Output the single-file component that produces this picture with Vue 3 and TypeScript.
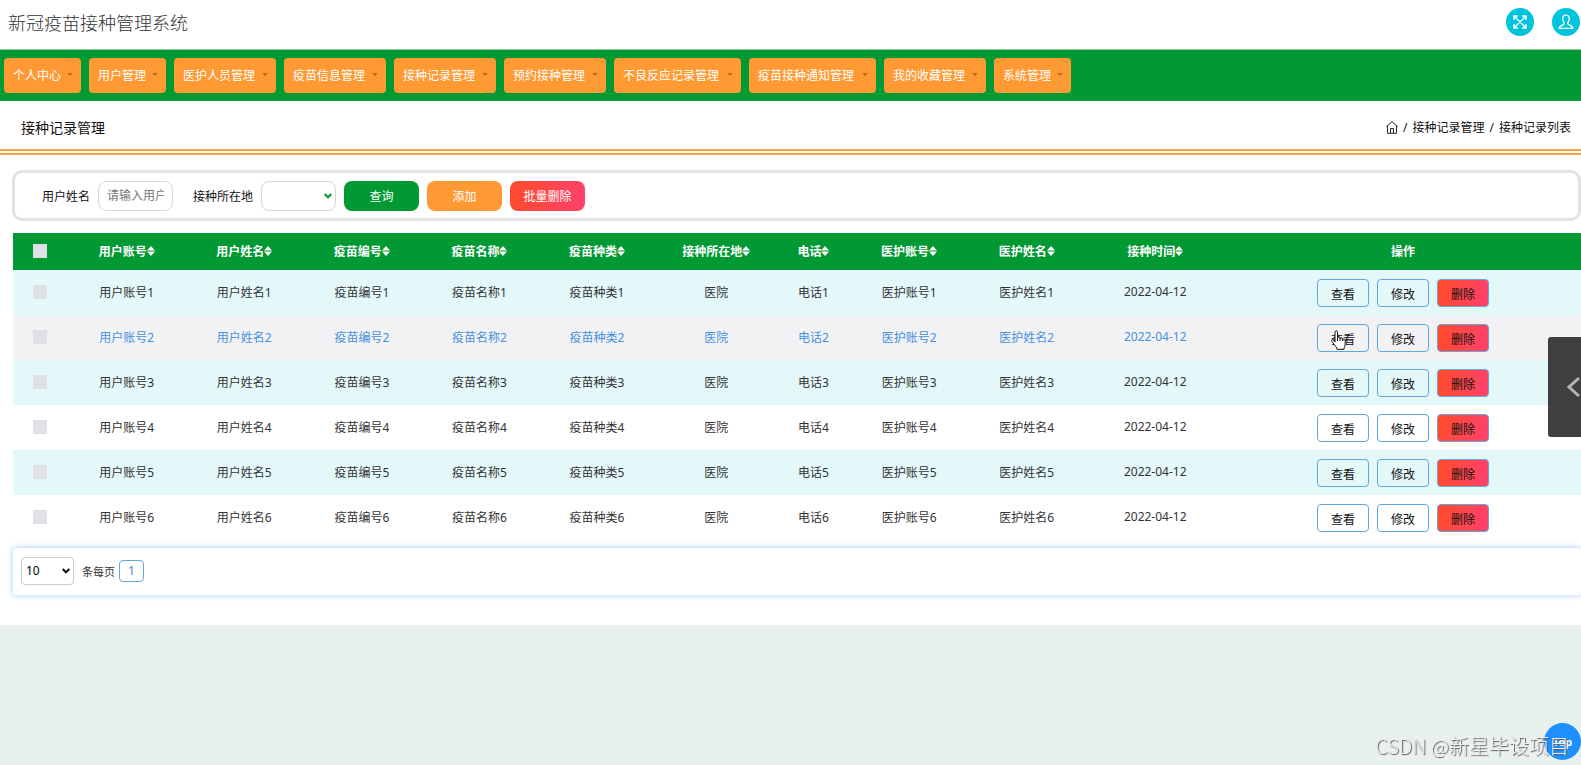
<script setup lang="ts">
import { ref } from 'vue'

interface Column {
  label: string
  key: string
  col: string
}

const menus = ['个人中心', '用户管理', '医护人员管理', '疫苗信息管理', '接种记录管理', '预约接种管理', '不良反应记录管理', '疫苗接种通知管理', '我的收藏管理', '系统管理']

const columns: Column[] = [
  { label: '用户账号', key: 'account', col: 'c-std' },
  { label: '用户姓名', key: 'name', col: 'c-std' },
  { label: '疫苗编号', key: 'code', col: 'c-std' },
  { label: '疫苗名称', key: 'vaccine', col: 'c-std' },
  { label: '疫苗种类', key: 'kind', col: 'c-std' },
  { label: '接种所在地', key: 'place', col: 'c-place' },
  { label: '电话', key: 'phone', col: 'c-phone' },
  { label: '医护账号', key: 'staffAccount', col: 'c-std' },
  { label: '医护姓名', key: 'staffName', col: 'c-std' },
  { label: '接种时间', key: 'date', col: 'c-date' },
]

const rows: Record<string, string>[] = [1, 2, 3, 4, 5, 6].map((n) => ({
  id: String(n),
  account: `用户账号${n}`,
  name: `用户姓名${n}`,
  code: `疫苗编号${n}`,
  vaccine: `疫苗名称${n}`,
  kind: `疫苗种类${n}`,
  place: '医院',
  phone: `电话${n}`,
  staffAccount: `医护账号${n}`,
  staffName: `医护姓名${n}`,
  date: '2022-04-12',
}))

const activeId = ref('2')
const userName = ref('')
const place = ref('')
const pageSize = ref('10')
</script>

<template>
  <div class="page">
    <div class="sheet">
      <header class="top">
        <h1>新冠疫苗接种管理系统</h1>
        <div class="tools">
          <button class="round" type="button" aria-label="全屏">
            <svg width="16" height="16" viewBox="0 0 16 16" fill="none" stroke="#fff" stroke-width="1.4">
              <path d="M2 6V2h4M10 2h4v4M14 10v4h-4M6 14H2v-4M2.5 2.5l11 11M13.5 2.5l-11 11" />
            </svg>
          </button>
          <button class="round" type="button" aria-label="用户">
            <svg width="16" height="16" viewBox="0 0 16 16" fill="none" stroke="#fff" stroke-width="1.3" stroke-linejoin="round">
              <path d="M8 1.2c-2.2 0-3.3 1.5-3.3 3.6 0 1.900.8 3.300 1.700 4.100.2 1-.2 1.400-1.200 1.800-2 .7-3.800 1.200-4 3.600h13.600c-.2-2.400-2-2.900-4-3.600-1-.4-1.400-.8-1.200-1.800.9-.8 1.700-2.200 1.700-4.100 0-2.100-1.100-3.600-3.300-3.600z" />
            </svg>
          </button>
        </div>
      </header>

      <nav class="menu">
        <button v-for="m in menus" :key="m" type="button" :class="'len' + m.length">
          <span>{{ m }}</span><i class="caret"></i>
        </button>
      </nav>

      <div class="heading">
        <h2>接种记录管理</h2>
        <div class="crumbs">
          <a href="#" aria-label="首页">
            <svg width="12" height="13" viewBox="0 0 12 13" fill="none" stroke="#222" stroke-width="1">
              <path d="M.5 5.500 6 .8l5.500 4.700M1.500 5v7.300h9V5M4.500 12V7.500h3V12" />
            </svg>
          </a>
          <span>/</span>
          <a href="#">接种记录管理</a>
          <span>/</span>
          <span>接种记录列表</span>
        </div>
      </div>

      <form class="filter" @submit.prevent>
        <label for="user">用户姓名</label>
        <input id="user" v-model="userName" class="field" type="text" placeholder="请输入用户姓名" />
        <label class="second" for="place">接种所在地</label>
        <span class="pick green">
          <select id="place" v-model="place" class="field">
            <option value=""></option>
            <option value="医院">医院</option>
          </select>
          <svg width="8" height="6" viewBox="0 0 8 6" fill="none" stroke="currentColor" stroke-width="2"><path d="M.7 1 4 4.300 7.300 1" /></svg>
        </span>
        <button class="act search" type="submit">查询</button>
        <button class="act add" type="button">添加</button>
        <button class="act remove" type="button">批量删除</button>
      </form>

      <table>
        <colgroup>
          <col class="c-check" />
          <col v-for="c in columns" :key="c.key" :class="c.col" />
          <col />
        </colgroup>
        <thead>
          <tr>
            <th><input type="checkbox" aria-label="全选" /></th>
            <th v-for="c in columns" :key="c.key">
              <span class="sort">{{ c.label }}<svg width="8" height="10" viewBox="0 0 8 10" fill="#fff"><path d="M0 4.500 4 0l4 4.500zM0 5.500h8L4 10z" /></svg></span>
            </th>
            <th>操作</th>
          </tr>
        </thead>
        <tbody>
          <tr v-for="r in rows" :key="r.id" :class="{ active: r.id === activeId }">
            <td><input type="checkbox" :aria-label="'选择' + r.account" /></td>
            <td v-for="c in columns" :key="c.key">{{ r[c.key] }}</td>
            <td class="last">
              <div class="ops">
                <span class="view">
                  <button type="button">查看</button>
                  <svg v-if="r.id === activeId" class="hand" width="16" height="20" viewBox="0 0 16 20" fill="#fff" stroke="#111" stroke-width="1" stroke-linejoin="round">
                    <path d="M4 12V2.200C4 .3 6.500.3 6.500 2.200V8c0-1.500 2.400-1.500 2.600 0v.8c.2-1.300 2.400-1.200 2.600.2v.8c.3-1.200 2.500-1 2.500.5v3.500c0 2-1.200 3-1.200 5.500H6c0-2-1.300-2.600-2.300-4.200C2.600 13.500 1.200 12.300.7 11.200c-.6-1.400.8-2 1.700-1.200z" />
                    <path d="M6.500 8v3M9.100 8.500V11M11.700 9.500V11" />
                  </svg>
                </span>
                <button type="button">修改</button>
                <button class="del" type="button">删除</button>
              </div>
            </td>
          </tr>
        </tbody>
      </table>

      <footer class="pager">
        <span class="pick dark">
          <select id="size" v-model="pageSize">
            <option value="10">10</option>
            <option value="25">25</option>
          </select>
          <svg width="8" height="6" viewBox="0 0 8 6" fill="none" stroke="currentColor" stroke-width="2"><path d="M.7 1 4 4.300 7.300 1" /></svg>
        </span>
        <label for="size">条每页</label>
        <button type="button">1</button>
      </footer>
    </div>

    <button class="drawer" type="button" aria-label="展开">
      <svg width="14" height="22" viewBox="0 0 14 22" fill="none" stroke="#b4b4b4" stroke-width="3"><path d="M13 2 3 11l10 9" /></svg>
    </button>
    <button class="to-top" type="button">Top</button>
    <div class="mark">CSDN @新星毕设项目</div>
  </div>
</template>

<style>
body {
  margin: 0;
  background: #e8f1ec;
}
</style>

<style scoped>
.page {
  min-height: 100vh;
  font-family: "Noto Sans", "Noto Sans CJK SC", sans-serif;
  font-size: 12px;
  color: #333;
}
.page * {
  box-sizing: border-box;
}
button,
input,
select {
  font: inherit;
}
button {
  padding: 0;
  border: 0;
  cursor: pointer;
}
a {
  color: inherit;
  text-decoration: none;
}
.sheet {
  background: #fff;
  padding-bottom: 30px;
}
.top {
  display: flex;
  align-items: center;
  justify-content: space-between;
  height: 50px;
  padding: 0 1px 6px 8px;
  border-bottom: 1px solid #8fcfa5;
}
h1 {
  margin: 0;
  font-size: 18px;
  font-weight: 300;
  color: #333;
}
.tools {
  display: flex;
  gap: 18px;
}
.round {
  display: grid;
  place-items: center;
  width: 28px;
  height: 28px;
  border-radius: 50%;
  background: #00c4dc;
}
.menu {
  display: flex;
  gap: 8px;
  padding: 8px 4px;
  background: #009933;
}
.menu button {
  display: flex;
  align-items: center;
  justify-content: space-between;
  height: 35px;
  padding: 0 8px 2px 9px;
  border-radius: 4px;
  background: #ff9933;
  color: #fff;
  white-space: nowrap;
}
.len4 {
  width: 77px;
}
.len6 {
  width: 102px;
}
.len8 {
  width: 127px;
}
.caret {
  border: 3px solid transparent;
  border-top-color: #b8701f;
  border-bottom: 0;
}
.heading {
  display: flex;
  align-items: center;
  justify-content: space-between;
  height: 54px;
  padding: 4px 10px 0 21px;
  border-bottom: 6px double #eba55c;
  background: linear-gradient(#fff, #fff) padding-box, linear-gradient(#fdf1d2, #fdf1d2) border-box;
  color: #111;
}
h2 {
  margin: 0;
  font-size: 14px;
  font-weight: 400;
}
.crumbs {
  display: flex;
  align-items: center;
  gap: 5px;
}
.crumbs svg {
  display: block;
}
.filter {
  display: flex;
  align-items: center;
  gap: 8px;
  height: 51px;
  margin: 15px 0 0 12px;
  padding: 0 27px;
  border: 3px solid #e2e2e2;
  border-radius: 10px;
  color: #111;
}
.second {
  margin-left: 12px;
}
.field {
  width: 75px;
  height: 30px;
  padding: 0 8px;
  border: 1px solid #d8d8d8;
  border-radius: 8px;
  background: #fff;
  outline: 0;
}
.field::placeholder {
  color: #777;
}
select {
  appearance: none;
}
.pick {
  display: grid;
  align-items: center;
}
.pick > * {
  grid-area: 1 / 1;
}
.pick svg {
  justify-self: end;
  margin-right: 4px;
  pointer-events: none;
}
.green {
  color: #009933;
}
.dark {
  color: #111;
}
.act {
  width: 75px;
  height: 30px;
  border-radius: 8px;
  color: #fff;
}
.search {
  background: #009933;
}
.add {
  background: #ff9933;
}
.remove,
.ops .del {
  background: linear-gradient(100deg, #ff4b2b, #ff416c);
}
table {
  width: calc(100% - 13px);
  margin: 12px 0 0 13px;
  border-collapse: collapse;
  table-layout: fixed;
}
.c-check {
  width: 3.5%;
}
.c-std {
  width: 7.5%;
}
.c-place {
  width: 7.7%;
}
.c-phone {
  width: 4.7%;
}
.c-date {
  width: 8.9%;
}
th,
td {
  padding: 0 0 2px;
  text-align: center;
}
th {
  height: 37px;
  background: #009933;
  color: #fff;
}
td {
  height: 45px;
}
td.last {
  padding: 0;
}
tbody tr:nth-child(odd) {
  background: #e4f8fa;
}
tbody .active {
  background: #f2f2f4;
  color: #4591e0;
}
.sort {
  display: inline-flex;
  align-items: center;
}
input[type="checkbox"] {
  display: block;
  appearance: none;
  width: 14px;
  height: 14px;
  margin: 0 auto;
  background: #dfe1e6;
}
.ops {
  display: flex;
  justify-content: center;
  gap: 8px;
}
.ops button {
  width: 52px;
  height: 28px;
  padding-top: 2px;
  border: 1px solid #62a8dc;
  border-radius: 4px;
  background: transparent;
  color: #111;
}
.view {
  position: relative;
}
.hand {
  position: absolute;
  left: 14px;
  top: 6px;
}
.pager {
  display: flex;
  align-items: center;
  height: 47px;
  margin: 8px 0 0 13px;
  padding: 0 8px 2px;
  border-radius: 3px;
  box-shadow: 0 0 6px #9cc9f5;
}
.pager select {
  width: 53px;
  height: 28px;
  padding: 0 4px;
  border: 1px solid #ccc;
  border-radius: 4px;
  background: #fff;
}
.pager label {
  margin: 0 4px 0 8px;
  font-size: 11px;
}
.pager button {
  width: 25px;
  height: 22px;
  border: 1px solid #62a8dc;
  border-radius: 4px;
  background: #fff;
  color: #4a88cc;
}
.drawer {
  position: fixed;
  right: 0;
  top: 337px;
  display: flex;
  align-items: center;
  justify-content: flex-end;
  width: 33px;
  height: 100px;
  padding-right: 1px;
  border-radius: 3px 0 0 3px;
  background: rgba(48, 48, 48, 0.92);
}
.to-top {
  position: fixed;
  right: 0;
  bottom: 5px;
  width: 37px;
  height: 37px;
  border-radius: 50%;
  background: #1e90ff;
  color: #fff;
  font-size: 11px;
  font-weight: 700;
}
.mark {
  position: fixed;
  right: 12px;
  bottom: 4px;
  font-family: "Noto Sans CJK SC", sans-serif;
  font-size: 20px;
  font-weight: 300;
  line-height: 30px;
  color: #eee;
  text-shadow: 1px 1px 1px #555;
  pointer-events: none;
}
</style>
